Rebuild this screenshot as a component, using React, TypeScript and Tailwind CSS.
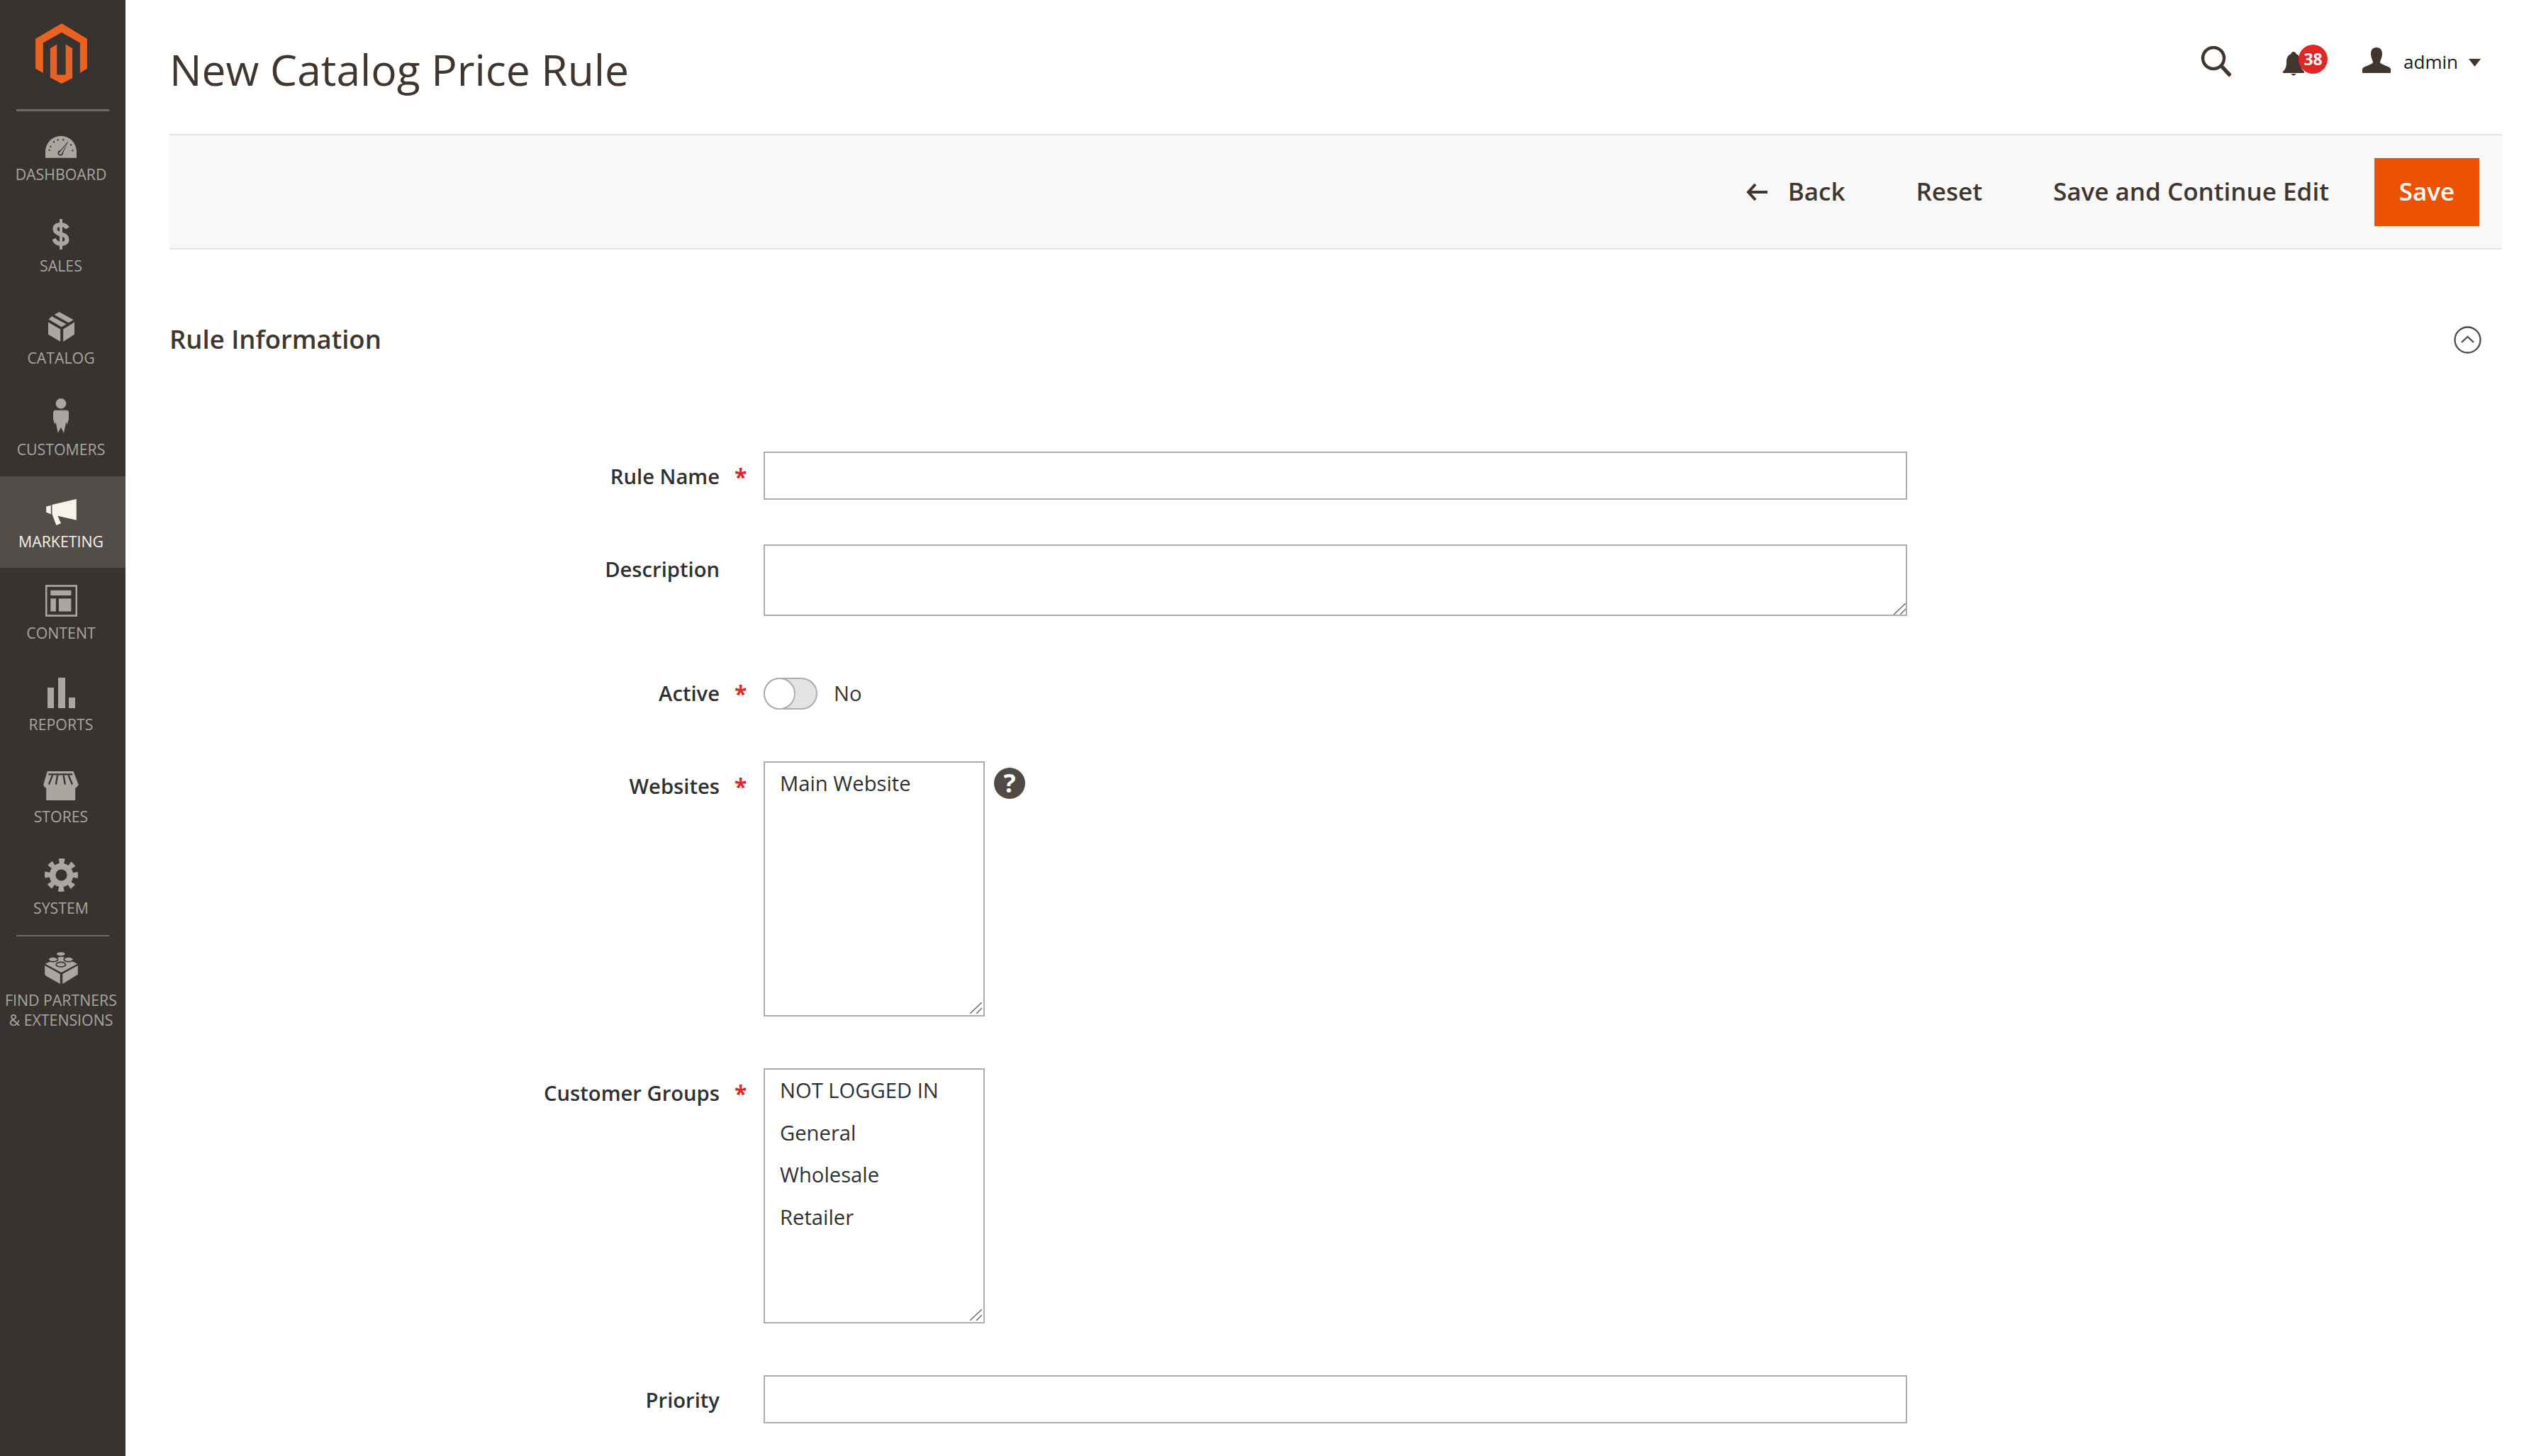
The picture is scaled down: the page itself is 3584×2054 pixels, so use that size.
const navIcon = {
  dashboard: (
    <svg width="44" height="32" viewBox="189 572 132 95" className="fill-current">
      <path d="M189 667V640a66 66 0 0 1 132 0V667Z" />
      <circle cx="253" cy="646" r="9" fill="none" stroke="#373330" strokeWidth="5" />
      <path d="M248 640L287 594L262 650Z" fill="#373330" />
      <path d="M251 642L282 604L259 647Z" />
      <g fill="#373330">
        <circle cx="206" cy="634" r="3.5" />
        <circle cx="211" cy="619" r="3.5" />
        <circle cx="225" cy="599" r="3.5" />
        <circle cx="242" cy="591" r="3.5" />
        <circle cx="265" cy="590" r="3.5" />
        <circle cx="297" cy="612" r="3.5" />
        <circle cx="304" cy="636" r="3.5" />
      </g>
    </svg>
  ),
  sales: (
    <svg width="24" height="43" viewBox="0 0 24 43" className="fill-current stroke-current">
      <rect x="10" y="0" width="4" height="43" stroke="none" />
      <path d="M21 13C19 9 16 8 12 8C6 8 3.5 10 3.5 14C3.500 19 8 20.500 12 21.500C17 22.500 20.500 24 20.500 29C20.500 33 17 35 12 35C7 35 4 33 2 28" fill="none" strokeWidth="6" />
    </svg>
  ),
  catalog: (
    <svg width="37" height="42" viewBox="198 1316 112 127" className="fill-current">
      <path d="M198 1360L250 1390V1443L198 1412Z" />
      <path d="M262 1390L310 1360V1412L262 1443Z" />
      <path d="M245 1316L306 1350L285 1362L224 1328Z" />
      <path d="M213 1335L275 1368L255 1380L200 1348Z" />
    </svg>
  ),
  customers: (
    <svg width="22" height="49" viewBox="225 183 66 147" className="fill-current">
      <circle cx="258" cy="205" r="22" />
      <path d="M233 233H283Q291 233 291 245V270L284 295L280 283L270 330L258 305L245 330L236 283L232 295L225 270V245Q225 233 233 233Z" />
    </svg>
  ),
  marketing: (
    <svg width="43" height="37" viewBox="192 608 129 112" className="fill-current">
      <path d="M192 640L212 635V672L192 665Z" />
      <path d="M217 632L321 608V698L241 680L255 712L235 720L217 672Z" />
    </svg>
  ),
  content: (
    <svg width="45" height="45" viewBox="190 975 136 135" className="fill-current">
      <rect x="193.500" y="979" width="129" height="127" fill="none" stroke="currentColor" strokeWidth="8" />
      <rect x="212" y="998" width="88" height="22" />
      <rect x="212" y="1033" width="23" height="55" />
      <rect x="247" y="1033" width="53" height="55" />
    </svg>
  ),
  reports: (
    <svg width="39" height="43" viewBox="0 0 39 43" className="fill-current">
      <rect x="0" y="14" width="9" height="29" />
      <rect x="15" y="0" width="10" height="43" />
      <rect x="30" y="28" width="9" height="15" />
    </svg>
  ),
  stores: (
    <svg width="50" height="41" viewBox="183 272 149 123" className="fill-current">
      <path d="M200 272H310L332 330L322 342H190L183 330Z" />
      <rect x="195" y="336" width="123" height="59" />
      <g stroke="#373330" strokeWidth="7">
        <path d="M204 285H306" />
        <path d="M222 288L206 328" />
        <path d="M243 288L236 328" />
        <path d="M268 288L275 328" />
        <path d="M289 288L305 328" />
      </g>
    </svg>
  ),
  system: (
    <svg width="47" height="47" viewBox="187 642 140 140" className="fill-none stroke-current">
      <circle cx="257" cy="712" r="37" strokeWidth="26" />
      <circle cx="257" cy="712" r="58" strokeWidth="24" strokeDasharray="22 23.550" transform="rotate(-10.900 257 712)" />
    </svg>
  ),
  partners: (
    <svg width="47" height="46" viewBox="187 1032 140 138" className="fill-current">
      <path d="M187 1092L252 1128V1170L195 1138L187 1130Z" />
      <path d="M262 1128L327 1092V1130L262 1170Z" />
      <path d="M257 1052L325 1085L257 1122L189 1085Z" />
      <g stroke="#373330" strokeWidth="5">
        <ellipse cx="255" cy="1043" rx="20" ry="10" />
        <ellipse cx="222" cy="1066" rx="20" ry="10" />
        <ellipse cx="288" cy="1066" rx="20" ry="10" />
        <ellipse cx="255" cy="1088" rx="20" ry="10" />
      </g>
    </svg>
  ),
};

const navItems = [
  { label: "DASHBOARD", icon: navIcon.dashboard },
  { label: "SALES", icon: navIcon.sales },
  { label: "CATALOG", icon: navIcon.catalog },
  { label: "CUSTOMERS", icon: navIcon.customers },
  { label: "MARKETING", icon: navIcon.marketing, active: true },
  { label: "CONTENT", icon: navIcon.content },
  { label: "REPORTS", icon: navIcon.reports },
  { label: "STORES", icon: navIcon.stores },
  { label: "SYSTEM", icon: navIcon.system },
];

function NavItem({ label, icon, active }: { label: React.ReactNode; icon: React.ReactNode; active?: boolean }) {
  return (
    <div className={active ? "h-[129.4px] bg-[#524d49] pr-[5px] text-[#f7f3eb]" : "h-[129.4px] pr-[5px] text-[#aaa6a0]"}>
      <div className="flex h-[69px] items-end justify-center">{icon}</div>
      <div className="mt-[9px] text-center text-[21.300px] leading-[28px]">{label}</div>
    </div>
  );
}

function Sidebar() {
  return (
    <aside className="w-[177px] shrink-0 bg-[#373330]">
      <div className="flex h-[154px] justify-center pt-[33px] pr-[5px]">
        <svg width="73" height="85" viewBox="148 100 217 253" fill="#ea6122">
          <path d="M258 100L365 165V290L335 308V182L258 138L180 182V308L148 290V165Z" />
          <path d="M210 205L238 188V316H275V188L303 205V330L258 353L210 328Z" />
        </svg>
      </div>
      <div className="relative mx-[23px] h-[3px] bg-[#736a62]" />
      <nav className="-mt-[3px]">
        {navItems.map((item) => (
          <NavItem key={item.label} {...item} />
        ))}
      </nav>
      <div className="mx-[23px] h-[2px] bg-[#736a62]" />
      <div className="-mt-[2px]">
        <NavItem
          icon={navIcon.partners}
          label={
            <>
              FIND PARTNERS
              <br />& EXTENSIONS
            </>
          }
        />
      </div>
    </aside>
  );
}

function PageHeader() {
  return (
    <header className="flex h-[189px] items-start justify-between">
      <h1 className="pt-[58px] text-[60.500px] leading-[80px] font-normal text-[#41362f]">New Catalog Price Rule</h1>
      <div className="mt-[62px] mr-[30px] flex h-[50px] items-center text-[#41362f]">
        <svg width="44" height="44" viewBox="0 0 44 44" fill="none" stroke="currentColor">
          <circle cx="19" cy="17" r="15" strokeWidth="4.500" />
          <path d="M30 28L43 42" strokeWidth="5.500" />
        </svg>
        <div className="relative mt-[6px] ml-[73px]">
          <svg width="30" height="34" viewBox="0 0 30 34" className="block fill-current">
            <path d="M15 0C13 0 11.500 1.500 11.500 3C6 5 5 10 5 15C5 22 3 25 0 28V30H30V28C27 25 25 22 25 15C25 10 24 5 18.500 3C18.500 1.500 17 0 15 0Z" />
            <path d="M11 31H19L15 34Z" />
          </svg>
          <span className="absolute top-[-10px] left-[22px] flex h-[41px] w-[41px] items-center justify-center rounded-full bg-[#e22626] text-[23px] font-bold text-white">
            38
          </span>
        </div>
        <svg width="40" height="36" viewBox="0 0 40 36" className="mb-[4px] ml-[82px] fill-current">
          <path d="M20 0C14 0 12 4 12 9C12 14 15 19 15 21C15 24 2 26 0 30V36H40V30C38 26 25 24 25 21C25 19 28 14 28 9C28 4 26 0 20 0Z" />
        </svg>
        <span className="ml-[18px] text-[26px] text-[#1c1917]">admin</span>
        <svg width="17" height="11" viewBox="0 0 17 11" className="mt-[2px] ml-[15px] fill-current">
          <path d="M0 0H17L8.500 11Z" />
        </svg>
      </div>
    </header>
  );
}

function Toolbar() {
  return (
    <div className="flex h-[163px] items-center justify-end border-y-[2px] border-[#e3e3e3] bg-[#f8f8f8] pr-[32px] text-[35px] font-semibold text-[#41362f]">
      <svg width="30" height="26" viewBox="0 0 30 26" fill="none" stroke="currentColor" strokeWidth="4" className="mr-[29px]">
        <path d="M13 2L3 13L13 24M3 13H30" />
      </svg>
      <span>Back</span>
      <span className="ml-[100px]">Reset</span>
      <span className="ml-[100px]">Save and Continue Edit</span>
      <button className="ml-[64px] h-[96px] w-[148px] bg-[#eb5202] font-semibold text-white">Save</button>
    </div>
  );
}

function Row({ label, required, className, labelClass = "pt-[13px]", children }: { label: string; required?: boolean; className?: string; labelClass?: string; children: React.ReactNode }) {
  return (
    <div className={`flex items-start ${className ?? ""}`}>
      <label className={`w-[776px] shrink-0 text-right text-[29.200px] leading-[45px] font-semibold text-[#303030] ${labelClass}`}>{label}</label>
      <span className={`w-[62px] shrink-0 pl-[21px] text-[32px] leading-[45px] font-bold text-[#e22626] ${labelClass}`}>{required ? "*" : ""}</span>
      {children}
    </div>
  );
}

function ResizeGrip() {
  return (
    <svg width="17" height="16" viewBox="0 0 17 16" fill="none" stroke="#6b6b6b" strokeWidth="1.500" className="absolute right-[2px] bottom-[2px]">
      <path d="M0 16L17 0M9 16L17 8" />
    </svg>
  );
}

function ListBox({ options }: { options: string[] }) {
  return (
    <div className="relative h-[360px] w-[312px] border-[2px] border-[#adadad] px-[21px] text-[29.200px] leading-[59.500px] text-[#303030]">
      {options.map((o) => (
        <div key={o}>{o}</div>
      ))}
      <ResizeGrip />
    </div>
  );
}

const inputClass = "block h-[68px] w-[1613px] border-[2px] border-[#adadad] bg-white";

export default function App() {
  return (
    <div className="flex h-[2054px] overflow-hidden bg-white font-['Open_Sans',sans-serif]">
      <Sidebar />
      <main className="min-w-0 flex-1 pr-[55px] pl-[62px]">
        <PageHeader />
        <Toolbar />
        <div className="mt-[96px] mb-[129px] flex h-[60px] items-center justify-between pr-[29px]">
          <h2 className="text-[36.500px] font-semibold text-[#41362f]">Rule Information</h2>
          <svg width="39" height="39" viewBox="0 0 39 39" fill="none" stroke="#514943" strokeWidth="2.300" className="mt-[3px]">
            <circle cx="19.500" cy="19.500" r="18" />
            <path d="M11 23L19.500 15L28 23" />
          </svg>
        </div>
        <Row label="Rule Name" required className="mb-[63px]">
          <input type="text" className={inputClass} />
        </Row>
        <Row label="Description" className="mb-[87px]">
          <div className="relative">
            <textarea className="block h-[101px] w-[1613px] resize-none border-[2px] border-[#adadad] bg-white" />
            <ResizeGrip />
          </div>
        </Row>
        <Row label="Active" required labelClass="pt-0" className="mb-[73px]">
          <div className="flex h-[45px] w-[76px] items-center rounded-full border-[2px] border-[#adadad] bg-[#e3e3e3]">
            <span className="-ml-[2px] h-[45px] w-[45px] rounded-full border-[2px] border-[#adadad] bg-white" />
          </div>
          <span className="ml-[23px] text-[29.200px] leading-[45px] text-[#41362f]">No</span>
        </Row>
        <Row label="Websites" required className="mb-[73px]">
          <ListBox options={["Main Website"]} />
          <span className="mt-[9px] ml-[13px] flex h-[44px] w-[44px] items-center justify-center rounded-full bg-[#514943] text-[36px] font-bold text-white">?</span>
        </Row>
        <Row label="Customer Groups" required className="mb-[73px]">
          <ListBox options={["NOT LOGGED IN", "General", "Wholesale", "Retailer"]} />
        </Row>
        <Row label="Priority">
          <input type="text" className={inputClass} />
        </Row>
      </main>
    </div>
  );
}
